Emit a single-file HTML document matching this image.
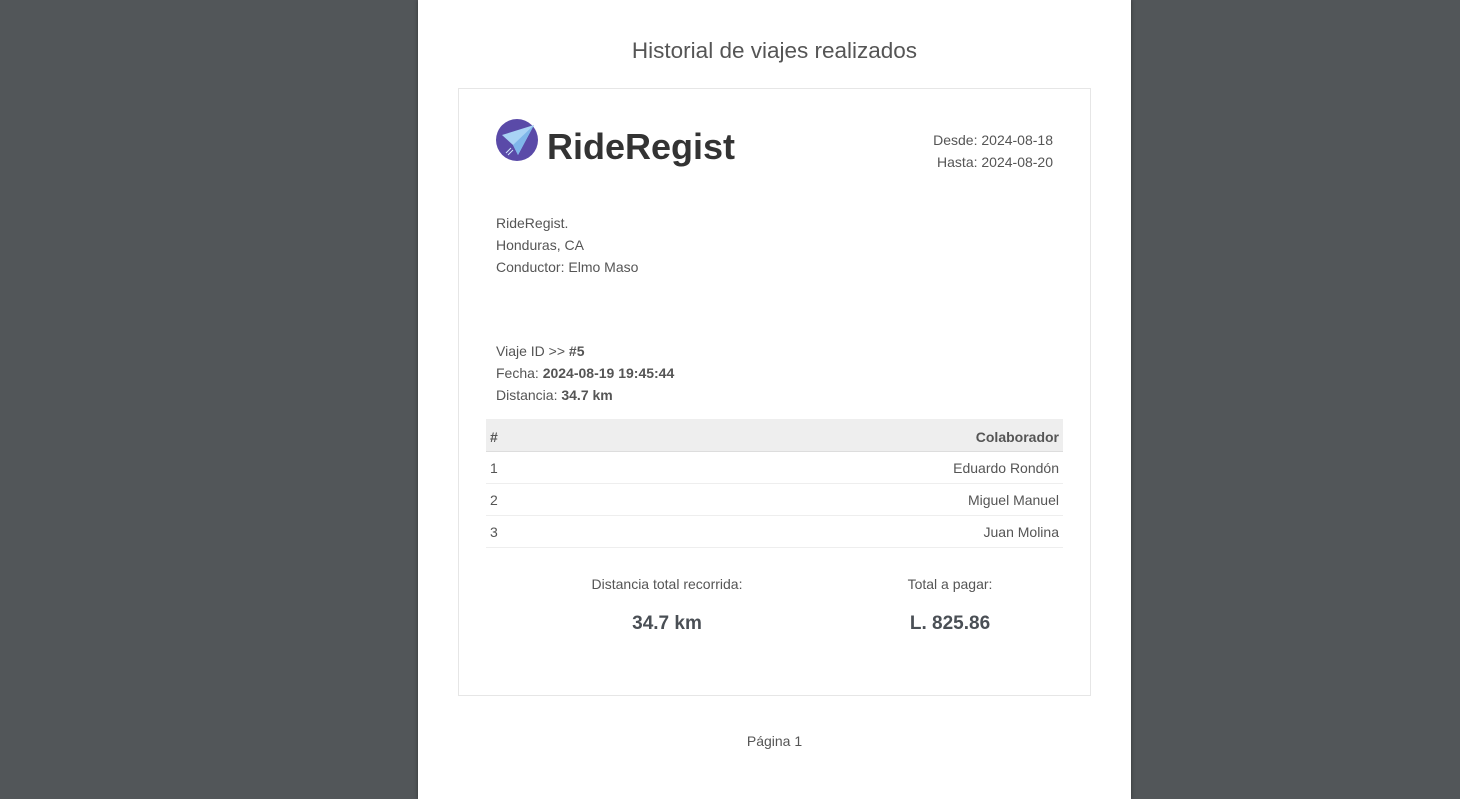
<!DOCTYPE html>
<html><head><meta charset="utf-8"><style>
*{margin:0;padding:0;box-sizing:border-box}
body{width:1460px;height:799px;background:#525659;font-family:"Liberation Sans",sans-serif;color:#555;position:relative;overflow:hidden}
.page{position:absolute;left:418px;top:0;width:713px;height:799px;background:#fff;box-shadow:0 0 4px rgba(0,0,0,.4)}
.abs{position:absolute}
.t{font-size:14px;line-height:22px;color:#555}
.box{position:absolute;left:40px;top:88px;width:633px;height:608px;border:1px solid #e6e6e6}
table{position:absolute;left:68px;top:419px;width:577px;border-collapse:collapse;font-size:14px;color:#555}
th{background:#eee;height:32px;text-align:left;padding:4px 4px 0;border-bottom:1px solid #ddd}
td{height:32px;padding:2px 4px 0;border-bottom:1px solid #eee}
.r{text-align:right}
</style></head><body>
<div class="page">
<div class="abs" style="left:0;width:713px;top:38px;text-align:center;font-size:22.5px;color:#555">Historial de viajes realizados</div>
<div class="box"></div>
<svg class="abs" style="left:78px;top:119px" width="42" height="42" viewBox="0 0 42 42">
<circle cx="21" cy="21" r="21" fill="#5a4aa8"/>
<path d="M6 16 L38 6 L22 36 L17 26 Z" fill="#a9d3f5"/>
<path d="M17 26 L38 6 L22 36 Z" fill="#7fb6ea"/>
<path d="M10 34 L15 29 M12 36 L17 31" stroke="#cfe6fb" stroke-width="1"/>
</svg>
<div class="abs" style="left:129px;top:126px;font-size:36px;font-weight:bold;color:#333">RideRegist</div>
<div class="abs t" style="right:78px;top:129px;text-align:right">Desde: 2024-08-18<br>Hasta: 2024-08-20</div>
<div class="abs t" style="left:78px;top:212px">RideRegist.<br>Honduras, CA<br>Conductor: Elmo Maso</div>
<div class="abs t" style="left:78px;top:340px">Viaje ID &gt;&gt; <b>#5</b><br>Fecha: <b>2024-08-19 19:45:44</b><br>Distancia: <b>34.7 km</b></div>
<table>
<tr><th>#</th><th class="r" style="padding-right:4px">Colaborador</th></tr>
<tr><td>1</td><td class="r">Eduardo Rondón</td></tr>
<tr><td>2</td><td class="r">Miguel Manuel</td></tr>
<tr><td>3</td><td class="r">Juan Molina</td></tr>
</table>
<div class="abs t" style="left:149px;width:200px;top:573px;text-align:center">Distancia total recorrida:</div>
<div class="abs t" style="left:432px;width:200px;top:573px;text-align:center">Total a pagar:</div>
<div class="abs" style="left:149px;width:200px;top:613px;text-align:center;font-size:19px;font-weight:bold;color:#4a4f55">34.7 km</div>
<div class="abs" style="left:432px;width:200px;top:613px;text-align:center;font-size:19px;font-weight:bold;color:#4a4f55">L. 825.86</div>
<div class="abs t" style="left:0;width:713px;top:730px;text-align:center">Página 1</div>
</div>
</body></html>
